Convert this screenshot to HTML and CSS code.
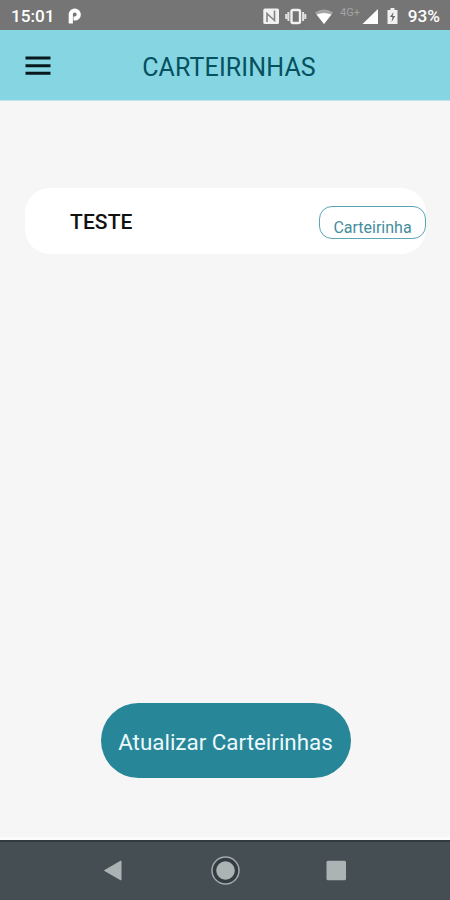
FILE: index.html
```html
<!DOCTYPE html>
<html lang="pt-BR">
<head>
<meta charset="utf-8">
<title>Carteirinhas</title>
<link rel="stylesheet" href="styles.css">
</head>
<body>
<div class="screen">
  <div class="status">
    <span class="clock">15:01</span>
    <svg class="app" width="14" height="16" viewBox="0 0 14 16"><path d="M2.800 15.500V7A4 4 0 1 1 6.800 10.500H5.500" fill="none" stroke="#fff" stroke-width="4.200"/></svg>
    <svg class="indicators" width="138" height="20" viewBox="0 0 138 20">
      <rect x="1.300" y="2.500" width="15.700" height="15.500" rx="1.500" fill="#f1f1f1"/>
      <path d="M5 16V7.500l7.500 7V4.500" fill="none" stroke="#858585" stroke-width="1.600"/>
      <rect x="29.500" y="4" width="8.500" height="13" rx="1.500" fill="none" stroke="#f1f1f1" stroke-width="2.400"/>
      <path d="M26.400 6v9M41.100 6v9M24.200 8v5M43.300 8v5" stroke="#e2e2e2" stroke-width="2"/>
      <path d="M53 6.500q9-6 18 0L62 18z" fill="#a5a5a5"/>
      <path d="M54.500 8.500q7.500-3 15 0L62 18z" fill="#fff"/>
      <path d="M116 3v15h-15.500z" fill="#fff"/>
      <path d="M125.500 4h3V2h4v2h3v14h-10z" fill="#f1f1f1"/>
      <path d="M131.500 6l-3.500 5h2.500l-1 5 3.700-6h-2.500z" fill="#666"/>
    </svg>
    <span class="network">4G+</span>
    <span class="battery">93%</span>
  </div>
  <header class="header">
    <svg class="menu" width="25" height="20" viewBox="0 0 25 20"><path d="M.500 2h25M.500 9.700h25M.500 17.300h25" stroke="#07191d" stroke-width="3.100"/></svg>
    <h1 class="title">CARTEIRINHAS</h1>
  </header>
  <main class="content">
    <div class="card">
      <span class="name">TESTE</span>
      <button class="open">Carteirinha</button>
    </div>
    <button class="update">Atualizar Carteirinhas</button>
  </main>
  <nav class="nav">
    <svg width="450" height="60" viewBox="0 0 450 60">
      <path d="M104.500 30.500L121 21v19z" fill="#abb3b5" stroke="#abb3b5" stroke-linejoin="round"/>
      <circle cx="225.500" cy="30.500" r="13.500" fill="#333c41" stroke="#a1aaac" stroke-width="1.500"/>
      <circle cx="225.500" cy="30.500" r="9.300" fill="#abb3b5"/>
      <rect x="326.500" y="20.700" width="19.500" height="19.500" rx="1.500" fill="#abb3b5"/>
    </svg>
  </nav>
</div>
</body>
</html>
```
FILE: styles.css
```css
* { box-sizing: border-box; }
body { margin: 0; font-family: Roboto, sans-serif; }
button { font-family: inherit; padding: 0; }
.screen { width: 450px; height: 900px; display: flex; flex-direction: column; background: #f6f6f6; overflow: hidden; }
.status { position: relative; height: 30px; background: #757575; color: #fff; display: flex; align-items: center; padding: 2px 10px 0 11px; }
.clock { font-size: 17.200px; font-weight: 500; line-height: 28px; width: 43px; flex: none; white-space: nowrap; }
.app { margin-left: 14px; flex: none; }
.indicators { margin-left: 180px; margin-top: -1px; flex: none; }
.network { position: absolute; left: 340px; top: 6px; font-size: 11px; line-height: 13px; color: #a3a3a3; }
.battery { margin-left: auto; font-size: 17.200px; font-weight: 500; line-height: 28px; }
.header { height: 71px; background: #85d6e2; display: grid; grid-template-columns: 25px 1fr 25px; align-items: center; padding: 1px 17px 0 25px; border-bottom: 1px solid #bfe6ec; }
.menu { overflow: visible; }
.title { margin: 4px 0 0; font-size: 25px; font-weight: 400; line-height: 30px; letter-spacing: 0.120px; color: #06505f; text-align: center; }
.content { flex: 1; display: flex; flex-direction: column; align-items: center; padding: 87px 24px 59px 25px; border-bottom: 3px solid #fbfdfd; }
.card { width: 401px; height: 66px; border-radius: 25px; background: #fff; display: flex; align-items: center; justify-content: space-between; padding: 3px 0 0 45px; }
.name { font-size: 21px; font-weight: 500; letter-spacing: 0.100px; color: #111; margin-top: -2px; }
.open { width: 107px; height: 33px; border: 1px solid #5ba5b5; border-radius: 13px; background: #fff; color: #438d9c; font-size: 16px; line-height: 20px; padding-top: 10px; }
.update { width: 250px; height: 75px; margin-top: auto; border: 0; border-radius: 38px; background: #278697; color: #edf9fc; font-size: 22.400px; padding-top: 3px; }
.nav { height: 60px; background: #454e53; border-top: 2px solid #303b40; }
.nav svg { display: block; margin-top: -2px; }
```
